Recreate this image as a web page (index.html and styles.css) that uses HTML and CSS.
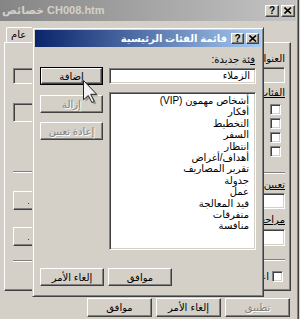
FILE: index.html
```html
<!DOCTYPE html>
<html lang="ar">
<head>
<meta charset="utf-8">
<title>قائمة الفئات الرئيسية</title>
<link rel="stylesheet" href="styles.css">
</head>
<body>
<div class="win">
  <div class="win-title">
    <span class="win-title-text">خصائص CH008.htm</span>
    <div class="caps">
      <span class="cap cap-help">?</span>
      <span class="cap"><svg width="8" height="7" viewBox="0 0 8 7"><path d="M0.5 0.5 L7 6.5 M7 0.5 L0.5 6.5" stroke="#000" stroke-width="1.6"/></svg></span>
    </div>
  </div>
  <div class="tabs">
    <div class="tab">عام</div>
  </div>
  <div class="panel">
    <div class="pcol pcol-left">
      <div class="sunk grey b1"></div>
      <div class="sunk grey b2"></div>
      <div class="etch l1"></div>
      <div class="raised rb1"><span class="dot"></span></div>
      <div class="raised rb2"><span class="dot"></span></div>
      <div class="etch l2"></div>
    </div>
    <div class="pcol pcol-right">
      <div class="plbl r-l1">العنوان</div>
      <div class="sunk grey r-b1"></div>
      <div class="plbl r-l2"><u>الفئات</u></div>
      <div class="checks">
        <span class="chk"></span>
        <span class="chk"></span>
        <span class="chk"></span>
        <span class="chk"></span>
      </div>
      <div class="etch r-ln1"></div>
      <div class="plbl r-l3"><u>تعيين</u></div>
      <div class="sunk white r-b2"></div>
      <div class="plbl r-l4"><u>مراجعة</u></div>
      <div class="sunk white r-b3"></div>
      <div class="etch r-ln2"></div>
      <div class="chkrow"><span class="chklbl">اعرض</span><span class="chk"></span></div>
    </div>
  </div>
  <div class="win-foot">
    <div class="raised btn">موافق</div>
    <div class="raised btn">إلغاء الأمر</div>
    <div class="raised btn disabled">تطبيق</div>
  </div>
</div>

<div class="dlg">
  <div class="dlg-title">
    <span class="dlg-title-text">قائمة الفئات الرئيسية</span>
    <div class="caps small">
      <span class="cap cap-help">?</span>
      <span class="cap"><svg width="8" height="7" viewBox="0 0 8 7"><path d="M0.5 0.5 L7 6.5 M7 0.5 L0.5 6.5" stroke="#000" stroke-width="1.6"/></svg></span>
    </div>
  </div>
  <div class="dlg-body">
    <div class="lbl-new"><u>ف</u>ئة جديدة:</div>
    <div class="default-wrap"><div class="raised btn-in">إضافة</div></div>
    <div class="sunk white txt-new">الزملاء</div>
    <div class="left-btns">
      <div class="raised btn-in disabled">إزالة</div>
      <div class="raised btn-in disabled">إعادة تعيين</div>
    </div>
    <div class="sunk white list">
      <div class="item">أشخاص مهمون (VIP)</div>
      <div class="item">أفكار</div>
      <div class="item">التخطيط</div>
      <div class="item">السفر</div>
      <div class="item">انتظار</div>
      <div class="item">أهداف/أغراض</div>
      <div class="item">تقرير المصاريف</div>
      <div class="item">جدولة</div>
      <div class="item">عمل</div>
      <div class="item">قيد المعالجة</div>
      <div class="item">متفرقات</div>
      <div class="item">منافسة</div>
    </div>
  </div>
  <div class="sep"></div>
  <div class="dlg-foot">
    <div class="raised btn-in">إلغاء الأمر</div>
    <div class="raised btn-in">موافق</div>
  </div>
</div>

<svg class="cursor" width="18" height="26" viewBox="0 0 18 26">
  <polygon points="2.5,2.5 2.5,21.7 7.3,17.5 10.9,24.5 13.3,23.5 9.7,16.3 15.7,16.3" fill="rgba(0,0,0,0.28)"/>
  <polygon points="0.5,0.5 0.5,19.7 5.3,15.5 8.9,22.5 11.3,21.5 7.7,14.3 13.7,14.3" fill="#f4f4f4" stroke="#222" stroke-width="1" stroke-linejoin="miter"/>
</svg>
</body>
</html>
```

FILE: styles.css
```css
* { box-sizing: border-box; margin: 0; padding: 0; }
html, body { width: 300px; height: 319px; overflow: hidden; background: #d4d0c8; }
body {
  position: relative;
  font-family: "Liberation Sans", "DejaVu Sans", sans-serif;
  font-size: 10px;
  color: #000;
}
u { text-decoration: underline; text-underline-offset: 1px; }

/* bevels */
.raised {
  background: #d4d0c8;
  border: 1px solid;
  border-color: #fff #404040 #404040 #fff;
  box-shadow: inset -1px -1px #808080;
}
.sunk {
  border: 1px solid;
  border-color: #808080 #fff #fff #808080;
  box-shadow: inset 1px 1px #404040, inset -1px -1px #d4d0c8;
}
.sunk.white { background: #fff; }
.sunk.grey { background: #d4d0c8; }
.etch { height: 2px; border-top: 1px solid #808080; border-bottom: 1px solid #fff; }
.disabled { color: #808080; text-shadow: 1px 1px 0 #fff; }

/* background window */
.win {
  width: 299px;
  height: 319px;
  border-right: 1px solid #404040;
  box-shadow: inset -1px 0 #808080;
}
.win-title {
  height: 21px;
  margin-right: 2px;
  display: flex;
  align-items: center;
  padding-left: 2px;
  background: linear-gradient(90deg, #858585, #c4c4c4);
  color: #d4d0c8;
  font-weight: bold;
  font-size: 11px;
}
.caps { margin-left: auto; display: flex; gap: 2px; margin-right: 1px; }
.cap {
  width: 14px;
  height: 12px;
  display: flex;
  align-items: center;
  justify-content: center;
  background: #d4d0c8;
  border: 1px solid;
  border-color: #fff #404040 #404040 #fff;
  box-shadow: inset -1px -1px #808080;
  color: #000;
  font-family: "Liberation Sans", sans-serif;
  font-size: 10px;
  font-weight: bold;
  line-height: 1;
}
.tabs { height: 21px; display: flex; align-items: flex-end; padding-left: 6px; }
.tab {
  height: 15px;
  padding: 0 9px 0 4px;
  border: 1px solid;
  border-bottom: 0;
  border-color: #fff #404040 transparent #fff;
  border-radius: 2px 2px 0 0;
  line-height: 13px;
  font-family: "DejaVu Sans", sans-serif;
  font-size: 10px;
}
.panel {
  margin-left: 4px;
  width: 287px;
  height: 249px;
  border: 1px solid;
  border-color: #fff #404040 #404040 #fff;
  box-shadow: inset -1px -1px #808080;
  display: flex;
  justify-content: space-between;
  padding: 0 5px 0 8px;
}
.pcol { display: flex; flex-direction: column; }
.pcol-left { width: 60px; }
.pcol-left .b1 { margin-top: 25px; height: 16px; }
.pcol-left .b2 { margin-top: 19px; height: 19px; }
.pcol-left .l1 { margin-top: 49px; }
.pcol-left .rb1 { margin-top: 18px; height: 19px; position: relative; }
.pcol-left .rb2 { margin-top: 17px; height: 19px; position: relative; }
.pcol-left .l2 { margin-top: 14px; }
.dot { position: absolute; left: 14px; top: 11px; width: 1px; height: 1px; background: #404040; }

.pcol-right { width: 44px; direction: rtl; }
.plbl {
  height: 12px;
  line-height: 12px;
  font-family: "DejaVu Sans", sans-serif;
  font-size: 10px;
  white-space: nowrap;
  text-align: right;
}
.r-l1 { margin-top: 10px; }
.r-b1 { margin-top: 2px; height: 16px; }
.r-l2 { margin-top: 4px; }
.checks { margin-top: 5px; display: flex; flex-direction: column; gap: 3px; padding-right: 4px; align-items: flex-start; }
.chk {
  width: 11px;
  height: 11px;
  background: #fff;
  border: 1px solid;
  border-color: #808080 #fff #fff #808080;
  box-shadow: inset 1px 1px #404040, inset -1px -1px #d4d0c8;
}
.r-ln1 { margin-top: 15px; }
.r-l3 { margin-top: 5px; }
.r-b2 { margin-top: 2px; height: 16px; }
.r-l4 { margin-top: 5px; }
.r-b3 { margin-top: 3px; height: 17px; }
.r-ln2 { margin-top: 13px; }
.chkrow { margin-top: 10px; display: flex; align-items: center; gap: 3px; padding-right: 2px; }
.chkrow .chk { order: -1; }
.chklbl { font-family: "DejaVu Sans", sans-serif; font-size: 10px; line-height: 11px; }

.win-foot {
  margin-top: 7px;
  display: flex;
  justify-content: flex-end;
  gap: 4px;
  padding-right: 8px;
}
.btn {
  width: 65px;
  height: 19px;
  display: flex;
  align-items: center;
  justify-content: center;
  font-family: "DejaVu Sans", sans-serif;
  font-size: 10px;
}

/* foreground dialog */
.dlg {
  position: absolute;
  left: 32px;
  top: 27px;
  width: 232px;
  height: 270px;
  background: #d4d0c8;
  border: 1px solid;
  border-color: #d4d0c8 #404040 #404040 #d4d0c8;
  box-shadow: inset 1px 1px #fff, inset -1px -1px #808080;
  padding: 2px;
  font-family: "Liberation Sans", "DejaVu Sans", sans-serif;
  font-size: 10px;
}
.dlg-title {
  height: 17px;
  display: flex;
  align-items: center;
  justify-content: flex-end;
  background: linear-gradient(90deg, #0a246a, #a6caf0);
  color: #fff;
  font-weight: bold;
  font-size: 10px;
  padding-right: 2px;
}
.dlg-title-text { direction: rtl; margin-right: 4px; }
.caps.small { margin-left: 0; margin-right: 0; }
.caps.small .cap { width: 13px; height: 11px; }

.dlg-body {
  padding: 7px 5px 0;
  display: grid;
  grid-template-columns: 63px 147px;
  column-gap: 6px;
}
.lbl-new {
  grid-column: 2;
  grid-row: 1;
  height: 12px;
  line-height: 12px;
  margin-bottom: 1px;
  direction: rtl;
  text-align: right;
  padding-right: 1px;
}
.default-wrap {
  grid-column: 1;
  grid-row: 2;
  height: 18px;
  border: 1px solid #000;
}
.default-wrap .btn-in { height: 16px; }
.btn-in {
  height: 18px;
  display: flex;
  align-items: center;
  justify-content: center;
  white-space: nowrap;
}
.txt-new {
  grid-column: 2;
  grid-row: 2;
  height: 16px;
  align-self: center;
  direction: rtl;
  padding-right: 5px;
  line-height: 13px;
}
.left-btns {
  grid-column: 1;
  grid-row: 3;
  display: flex;
  flex-direction: column;
  gap: 9px;
  padding-top: 10px;
}
.list {
  grid-column: 2;
  grid-row: 3;
  margin-top: 7px;
  height: 158px;
  direction: rtl;
  padding: 2px 6px 0 0;
}
.item { line-height: 11.4px; height: 11.4px; white-space: nowrap; }
.sep { margin: 12px 2px 0; }
.dlg-foot { padding: 6px 5px 0; display: flex; gap: 4px; }
.dlg-foot .btn-in { width: 64px; }

.cursor { position: absolute; left: 83px; top: 80px; }
```
